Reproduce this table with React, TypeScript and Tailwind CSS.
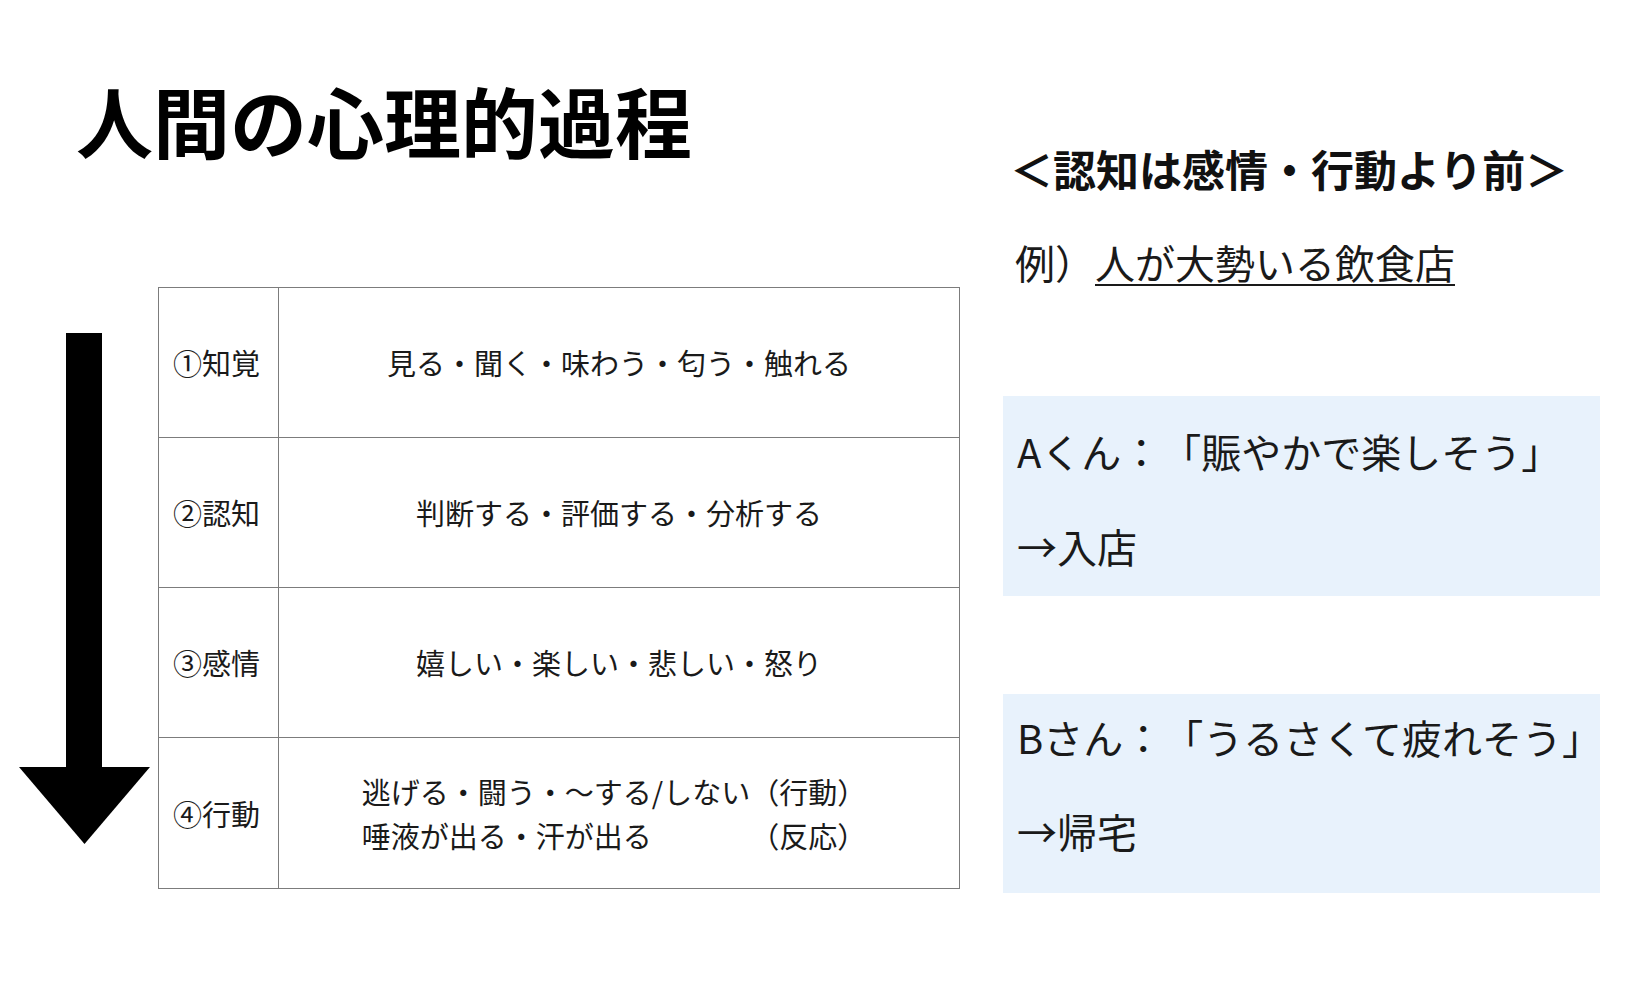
import React from "react";

const rows = [
  { label: "①知覚", body: "見る・聞く・味わう・匂う・触れる" },
  { label: "②認知", body: "判断する・評価する・分析する" },
  { label: "③感情", body: "嬉しい・楽しい・悲しい・怒り" },
];

const DownArrow: React.FC = () => (
  <svg width="131" height="511" viewBox="0 0 131 511" className="mt-[46px] shrink-0">
    <rect x="47" y="0" width="36" height="435" fill="#000" />
    <polygon points="0,434 131,434 65.5,511" fill="#000" />
  </svg>
);

const App: React.FC = () => {
  return (
    <div className="w-[1636px] h-[1002px] bg-white flex overflow-hidden text-[#111] [text-spacing-trim:space-all] font-['Noto_Sans_CJK_JP','Noto_Sans',sans-serif]">
      {/* left: title + process table */}
      <div className="w-[1003px] shrink-0">
        <div className="pl-[76px] pt-[81px]">
          <h1 className="text-[77px] leading-[77px] font-bold text-black">人間の心理的過程</h1>
        </div>

        <div className="flex items-start mt-[129px] pl-[19px] gap-[8px]">
          <DownArrow />
          <table className="w-[802px] border-collapse border border-[#7c7c7c] text-[29px] text-[#1a1a1a]">
            <tbody>
              {rows.map((r) => (
                <tr key={r.label} className="h-[150px]">
                  <td className="w-[120px] pl-[14px] border border-[#7c7c7c] leading-[29px]">{r.label}</td>
                  <td className="border border-[#7c7c7c] text-center leading-[29px]">{r.body}</td>
                </tr>
              ))}
              <tr className="h-[151px]">
                <td className="w-[120px] pl-[14px] border border-[#7c7c7c] leading-[29px]">④行動</td>
                <td className="border border-[#7c7c7c]">
                  <div className="flex justify-center pr-[10px]">
                    <div className="grid grid-cols-[auto_auto] leading-[44px]">
                      <span>逃げる・闘う・〜する/しない</span>
                      <span>（行動）</span>
                      <span>唾液が出る・汗が出る</span>
                      <span>（反応）</span>
                    </div>
                  </div>
                </td>
              </tr>
            </tbody>
          </table>
        </div>
      </div>

      {/* right: example */}
      <div className="w-[597px] shrink-0">
        <h2 className="pt-[147px] pl-[7px] text-[43px] leading-[43px] font-bold text-[#111] whitespace-nowrap">
          ＜認知は感情・行動より前＞
        </h2>
        <p className="mt-[52px] pl-[12px] text-[40px] leading-[40px] text-[#1a1a1a]">
          例）
          <span className="underline decoration-2 underline-offset-[5px]">人が大勢いる飲食店</span>
        </p>

        <div className="mt-[114px] h-[200px] bg-[#e8f2fc] pl-[14px] pt-[35px] text-[40px] leading-[40px] text-[#1a1a1a] whitespace-nowrap">
          <div>Aくん：「賑やかで楽しそう」</div>
          <div className="mt-[55px]">→入店</div>
        </div>

        <div className="mt-[98px] h-[199px] bg-[#e8f2fc] pl-[14px] pt-[23px] text-[40px] leading-[40px] text-[#1a1a1a] whitespace-nowrap">
          <div>Bさん：「うるさくて疲れそう」</div>
          <div className="mt-[54px]">→帰宅</div>
        </div>
      </div>
    </div>
  );
};

export default App;
